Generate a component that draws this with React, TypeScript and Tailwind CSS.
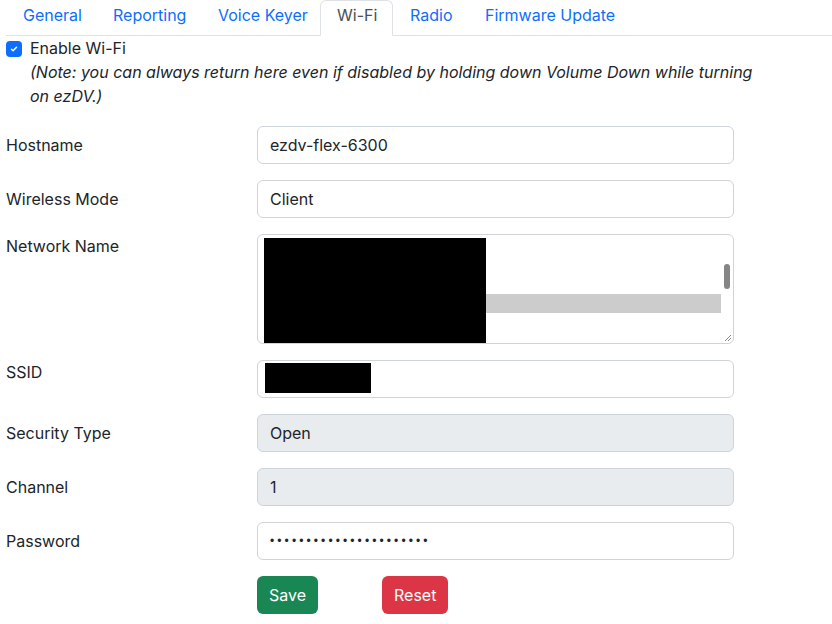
import { type ReactNode } from 'react'

const tabs = [
  { label: 'General', w: 'w-[90px]' },
  { label: 'Reporting', w: 'w-[105px]' },
  { label: 'Voice Keyer', w: 'w-[119px]' },
  { label: 'Wi-Fi', w: 'w-[73px]', active: true },
  { label: 'Radio', w: 'w-[75px]' },
  { label: 'Firmware Update', w: 'w-[160px]' },
]

const Row = ({ label, top, children }: { label: string; top?: boolean; children: ReactNode }) => (
  <div className="grid grid-cols-[251px_477px] mb-4">
    <label className={`leading-6 ${top ? '' : 'pt-[7px]'}`}>{label}</label>
    {children}
  </div>
)

const inputCls =
  'h-[38px] w-full rounded-md border border-[#ced4da] px-3 text-base leading-6 text-[#212529] outline-none'

export default function App() {
  return (
    <div
      className="w-[832px] h-[624px] overflow-hidden bg-white text-[#212529] text-base"
      style={{ fontFamily: 'Inter, "Liberation Sans", sans-serif' }}
    >
      <div className="pl-[6px]">
        {/* Tabs */}
        <ul className="flex border-b border-[#dee2e6] h-[36px]">
          {tabs.map((t) => (
            <li
              key={t.label}
              className={`${t.w} shrink-0 pl-[16px] pt-[2px] leading-6 -mb-px border rounded-t-md ${
                t.active
                  ? 'border-[#dee2e6] border-b-white bg-white text-[#495057]'
                  : 'border-transparent text-[#0d6efd]'
              }`}
            >
              {t.label}
            </li>
          ))}
        </ul>

        {/* Enable checkbox */}
        <div className="w-[800px] flex gap-2 mb-[18px]">
          <div className="mt-[5px] w-4 h-4 rounded-[4px] bg-[#0d6efd] flex items-center justify-center shrink-0">
            <svg width="10" height="10" viewBox="0 0 20 20" fill="none">
              <path d="M5 10.5l3.2 3L15 6.5" stroke="#fff" strokeWidth="3" strokeLinecap="round" strokeLinejoin="round" />
            </svg>
          </div>
          <div className="leading-6">
            <div>Enable Wi-Fi</div>
            <div className="italic">
              (Note: you can always return here even if disabled by holding down Volume Down while turning
              <br />
              on ezDV.)
            </div>
          </div>
        </div>

        <Row label="Hostname">
          <input className={inputCls} readOnly defaultValue="ezdv-flex-6300" />
        </Row>

        <Row label="Wireless Mode">
          <input className={inputCls} readOnly defaultValue="Client" />
        </Row>

        <Row label="Network Name" top>
          <div className="relative h-[110px] rounded-md border border-[#ced4da] overflow-hidden">
            <div className="flex pl-[6px] pt-[3px]">
              <div className="w-[222px] h-[120px] bg-black shrink-0" />
              <div className="w-[235px] h-[19px] mt-[56px] bg-[#cccccc] shrink-0" />
            </div>
            <div className="absolute right-[3px] top-[29px] w-[6px] h-[25px] rounded-full bg-[#858585]" />
            <svg className="absolute right-[1px] bottom-[1px]" width="8" height="8" viewBox="0 0 8 8">
              <path d="M7 1L1 7M7 4L4 7" stroke="#888" strokeWidth="1" />
            </svg>
          </div>
        </Row>

        <Row label="SSID" top>
          <div className="h-[38px] rounded-md border border-[#ced4da] pl-[7px] pt-[2px]">
            <div className="w-[106px] h-[30px] bg-black" />
          </div>
        </Row>

        <Row label="Security Type">
          <input className={`${inputCls} bg-[#e9ecef]`} readOnly defaultValue="Open" />
        </Row>

        <Row label="Channel">
          <input className={`${inputCls} bg-[#e9ecef]`} readOnly defaultValue="1" />
        </Row>

        <Row label="Password">
          <input
            className={`${inputCls} text-[12px] tracking-[3.1px]`}
            style={{ fontFamily: '"Liberation Sans", sans-serif' }}
            type="password"
            readOnly
            defaultValue="abcdefghijklmnopqrstuv"
          />
        </Row>

        <div className="flex pl-[251px] gap-[64px]">
          <button className="h-[38px] px-3 rounded-md bg-[#198754] text-white leading-6">Save</button>
          <button className="h-[38px] px-3 rounded-md bg-[#dc3545] text-white leading-6">Reset</button>
        </div>
      </div>
    </div>
  )
}
